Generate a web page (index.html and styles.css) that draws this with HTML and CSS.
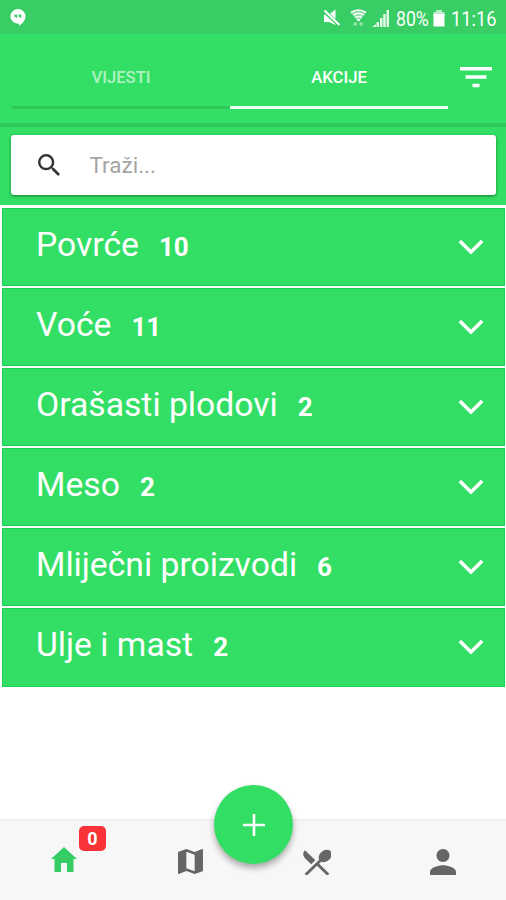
FILE: index.html
```html
<!DOCTYPE html>
<html lang="hr">
<head>
<meta charset="utf-8">
<title>Akcije</title>
<link rel="stylesheet" href="styles.css">
</head>
<body>
<div class="app">
  <div class="status">
    <svg class="chat" width="16" height="18" viewBox="0 0 16 18"><path fill="#fff" d="M8 0a7.500 7.300 0 0 1 7.500 7.300c0 4-3.500 7.600-6.500 9.700v-2.300H8A7.500 7.300 0 0 1 8 0z"/><path fill="#39cd65" d="M4.500 5.500h2.700v2.500L6 9.500V8H4.500zM8.600 5.500h2.700v2.500l-1.200 1.500V8H8.600z"/></svg>
    <svg class="mute" width="18" height="18" viewBox="0 0 18 18"><path fill="#fff" d="M1 5.500h5L12.500 .5v15.500L6 13H1z"/><path d="M0 1l17 15.500" stroke="#39cd65" stroke-width="4"/><path d="M1.500 1.500L16.500 16" stroke="#fff" stroke-width="2.200"/></svg>
    <svg class="wifi" width="17" height="18" viewBox="0 0 17 18"><path fill="#fff" fill-opacity=".4" d="M.5 3.500Q8.500-2 16.500 3.500L8.500 13z"/><path d="M1 3.500Q8.500-1.500 16 3.500M3.500 6Q8.500 2.500 13.500 6M5.500 8.500Q8.500 6.500 11.500 8.500" fill="none" stroke="#fff" stroke-width="1.700"/><path fill="#fff" d="M6.500 10h4l-2 2.500z"/><path fill="#fff" fill-opacity=".5" d="M3.500 13.500h3.500v3H3.500zM9.500 13.500h3v3h-3z"/></svg>
    <svg class="signal" width="18" height="17" viewBox="0 0 18 17"><path fill="#fff" fill-opacity=".85" d="M0 17l4-3v3zM4.500 12h2.500v5H4.500zM8 8h2.500v9H8zM11.200 4h2.500v13h-2.500zM14.500 0H17v17h-2.500z"/></svg>
    <span class="percent">80%</span>
    <svg class="battery" width="12" height="17" viewBox="0 0 12 17"><path fill="#fff" fill-opacity=".65" d="M3 0h6v2h2.500v4H.5V2H3z"/><path fill="#fff" d="M.5 4h11v12.500H.5z"/></svg>
    <span class="clock">11:16</span>
  </div>
  <header class="tabs">
    <div class="tab">VIJESTI</div>
    <div class="tab active">AKCIJE</div>
    <svg class="filter" width="32" height="21" viewBox="0 0 32 21"><path fill="#fff" d="M0 0h32v3.500H0zM5.500 8.300h21v3.500h-21zM12.500 16.700h7v3.500h-7z"/></svg>
  </header>
  <div class="search-wrap">
    <div class="search">
      <svg width="22" height="22" viewBox="3 3 17.500 17.500"><path fill="#333" d="M15.500 14h-.79l-.28-.27A6.471 6.471 0 0 0 16 9.500 6.500 6.500 0 1 0 9.500 16c1.610 0 3.090-.59 4.230-1.570l.27.28v.79l5 4.990L20.490 19l-4.990-5zm-6 0C7.010 14 5 11.990 5 9.500S7.010 5 9.500 5 14 7.010 14 9.500 11.990 14 9.500 14z"/></svg>
      <span>Traži...</span>
    </div>
  </div>
  <main class="list">
    <div class="row"><span class="name">Povrće</span><b>10</b><svg class="chev" width="26" height="16" viewBox="0 0 26 16"><path d="M1.800 2L13 13 24.200 2"/></svg></div>
    <div class="row"><span class="name">Voće</span><b>11</b><svg class="chev" width="26" height="16" viewBox="0 0 26 16"><path d="M1.800 2L13 13 24.200 2"/></svg></div>
    <div class="row"><span class="name">Orašasti plodovi</span><b>2</b><svg class="chev" width="26" height="16" viewBox="0 0 26 16"><path d="M1.800 2L13 13 24.200 2"/></svg></div>
    <div class="row"><span class="name">Meso</span><b>2</b><svg class="chev" width="26" height="16" viewBox="0 0 26 16"><path d="M1.800 2L13 13 24.200 2"/></svg></div>
    <div class="row"><span class="name">Mliječni proizvodi</span><b>6</b><svg class="chev" width="26" height="16" viewBox="0 0 26 16"><path d="M1.800 2L13 13 24.200 2"/></svg></div>
    <div class="row"><span class="name">Ulje i mast</span><b>2</b><svg class="chev" width="26" height="16" viewBox="0 0 26 16"><path d="M1.800 2L13 13 24.200 2"/></svg></div>
  </main>
  <nav class="nav">
    <div class="item"><svg width="26" height="25" viewBox="0 0 26 25"><path fill="#35cd63" d="M13 0L0 12h3.500v13h6.500v-9h6v9h6.500V12H26z"/></svg><span class="badge">0</span></div>
    <div class="item"><svg width="25" height="25" viewBox="3 3 18 18"><path fill="#666" d="M20.500 3l-.16.030L15 5.100 9 3 3.360 4.900c-.21.070-.36.250-.36.480V20.500c0 .28.220.5.500.5l.16-.030L9 18.900l6 2.100 5.640-1.900c.21-.070.360-.250.360-.480V3.500c0-.28-.22-.5-.5-.5zM15 19l-6-2.110V5l6 2.110V19z"/></svg></div>
    <div class="item"><svg width="28" height="26" viewBox="2.600 2.600 18.800 18.200" preserveAspectRatio="none"><path fill="#666" d="M8.100 13.340l2.830-2.830L3.910 3.500a4.008 4.008 0 0 0 0 5.660l4.190 4.180zm6.780-1.810c1.530.71 3.680.21 5.270-1.380 1.910-1.910 2.280-4.650.81-6.120-1.460-1.460-4.200-1.100-6.120.81-1.590 1.590-2.090 3.740-1.380 5.270L3.700 19.870l1.410 1.410L12 14.410l6.880 6.880 1.410-1.410L13.410 13l1.470-1.470z"/></svg></div>
    <div class="item"><svg width="26" height="26" viewBox="4 4 16 16"><path fill="#666" d="M12 12c2.210 0 4-1.790 4-4s-1.790-4-4-4-4 1.790-4 4 1.790 4 4 4zm0 2c-2.670 0-8 1.340-8 4v2h16v-2c0-2.660-5.330-4-8-4z"/></svg></div>
    <div class="fab"><svg width="22" height="22" viewBox="0 0 22 22"><path d="M11 0v22M0 11h22" stroke="#fff" stroke-width="2.600"/></svg></div>
  </nav>
</div>
</body>
</html>
```
FILE: styles.css
```css
* { box-sizing: border-box; }
body { margin: 0; background: #fff; font-family: Roboto, "Liberation Sans", sans-serif; }
svg { display: block; flex: none; }
.app { width: 506px; height: 900px; display: flex; flex-direction: column; overflow: hidden; }
.status { height: 34px; flex: none; background: #39cd65; display: flex; align-items: center; padding: 2px 9px 0 10px; color: #fff; }
.chat { margin-right: auto; }
.mute { margin-right: 9px; }
.wifi { margin-right: 5px; }
.signal { margin-right: 6px; }
.percent, .clock { font-size: 21px; line-height: 32px; padding-top: 2px; white-space: nowrap; transform-origin: left center; }
.percent { width: 33px; transform: scaleX(.84); margin-right: 4px; }
.battery { margin-right: 6px; }
.clock { width: 46px; transform: scaleX(.87); }
.tabs { height: 93px; flex: none; background: #33de65; border-bottom: 4px solid #2fc65a; display: flex; padding: 0 14px 0 12px; }
.tab { width: 218px; height: 75px; padding-top: 14px; display: flex; align-items: center; justify-content: center; font-size: 16.700px; font-weight: 500; color: rgba(255,255,255,.62); border-bottom: 3px solid #2fc65a; }
.tab.active { color: #fff; border-color: #effff2; }
.filter { margin: 33px 0 0 auto; }
.search-wrap { height: 78px; flex: none; background: #33de65; padding: 8px 10px 10px 11px; }
.search { height: 60px; background: #fff; border-radius: 3px; box-shadow: 0 1px 3px rgba(0,70,20,.65); display: flex; align-items: center; padding-left: 27px; color: #a5a5a5; font-size: 22.500px; }
.search span { margin-left: 29.500px; }
.list { display: flex; flex-direction: column; gap: 2px; padding: 2.500px 1px 0 2px; }
.row { height: 78.200px; background: #33de65; border: 1px solid #18d353; display: flex; align-items: baseline; padding: 16px 20.500px 0 33px; color: #fff; line-height: 40px; }
.name { font-size: 33.700px; white-space: nowrap; }
.row b { font-size: 26px; font-weight: 700; margin-left: 20px; }
.chev { margin-left: auto; align-self: flex-start; margin-top: 14px; fill: none; stroke: #fff; stroke-width: 3.500px; }
.nav { position: relative; height: 81px; margin-top: auto; flex: none; background: #f7f7f7; border-top: 2px solid #eee; display: flex; }
.item { position: relative; flex: 1; display: flex; justify-content: center; padding: 28px 0 0 1px; }
.item:first-child { padding-top: 26px; }
.badge { position: absolute; left: 79px; top: 5px; width: 27px; height: 25px; border-radius: 5px; background: #f93338; color: #fff; font-weight: 700; font-size: 18px; line-height: 25px; text-align: center; }
.fab { position: absolute; left: 214px; top: -36px; width: 79px; height: 79px; border-radius: 50%; background: #33de65; box-shadow: 0 4px 6px rgba(0,0,0,.32); display: flex; align-items: center; justify-content: center; }
```
